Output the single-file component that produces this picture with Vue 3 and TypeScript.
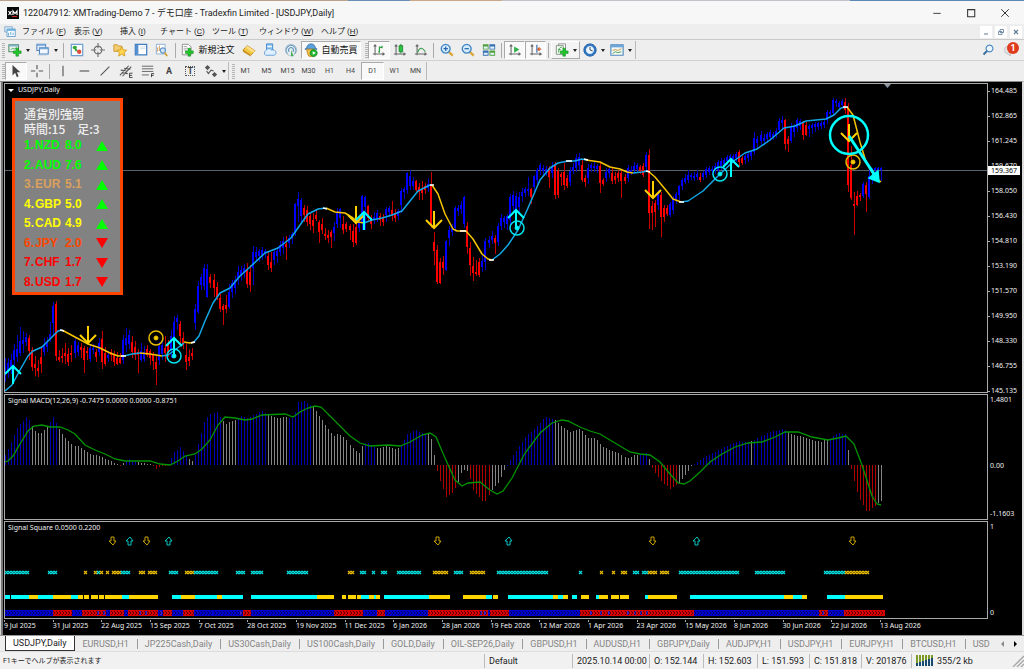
<script setup lang="ts">
import { h, ref } from 'vue'

type Shape = { d: string; f?: string; s?: string; w?: number }

const green = '#1fb82c'
const plus = (x: number, y: number): Shape => ({
  d: `M${x + 3} ${y}h3v3h3v3h-3v3h-3v-3h-3v-3h3z`, f: '#22c42c', s: '#128a1c', w: 0.6,
})
const axes: Shape = { d: 'M3.5 2v12M1 12.5h13M2 4l1.500-2 1.500 2M12 11l2 1.500-2 1.500', s: '#666', w: 1.2 }

const icons: Record<string, Shape[]> = {
  newChart: [{ d: 'M1 2h11v8H1z', f: '#eef5ee', s: '#4d8a66', w: 1.2 }, { d: 'M1 2h11v2H1z', f: '#7fb2c9' }, { d: 'M3 8l2-2 2 1 3-2', s: '#3f9b58' }, plus(6, 6)],
  profiles: [{ d: 'M1 1.500h10v7H1z', f: '#e4eefa', s: '#5386bd', w: 1.2 }, { d: 'M4 5.500h10v7H4z', f: '#f3f8ff', s: '#5386bd', w: 1.2 }, { d: 'M4 5h10v2H4zM1 1h10v2H1z', f: '#74a3d6' }, { d: 'M2 13.500h11', s: '#9bbbdd' }],
  market: [{ d: 'M1.500 1.500h13v13h-13z', f: '#fff', s: '#6ea0d0', w: 1.4 }, { d: 'M3 5a2.500 2 0 1 1 5 0a2.500 2 0 1 1-5 0', f: '#35a838' }, { d: 'M5 6l3 1 1 3-3-1z', f: '#35a838' }, { d: 'M8 10a2.500 2.500 0 1 1 5 0a2.500 2.500 0 1 1-5 0', f: '#df4b3d' }],
  target: [{ d: 'M8 3.500a4.500 4.500 0 1 0 .01 0M8 0v6M8 10v6M0 8h6M10 8h6', s: '#707070', w: 1.3 }],
  navigator: [{ d: 'M1 2h4l1 1.500h4v6H1z', f: '#f6cf70', s: '#c99327' }, { d: 'M10 4l1.700 3.800 4 .4-3 2.700.9 4-3.600-2.100L6.400 15l.9-4-3-2.700 4-.4z', f: '#ffd64d', s: '#d29a22' }],
  terminal: [{ d: 'M1.500 1.500h13v12h-13z', f: '#fff', s: '#3e7dc0', w: 1.4 }, { d: 'M2 2h3v11H2z', f: '#558fd0' }, { d: 'M7 4.500h6M7 6.500h6', s: '#c9d8e8' }],
  tester: [{ d: 'M1.500 1.500h10v11h-10z', f: '#fff', s: '#83a9cd' }, { d: 'M3 10V5M5 9V3M7 11V6', s: '#d2914a' }, { d: 'M9 5.500a3 3 0 1 0 .01 0', f: '#cce4f8', s: '#5d93c4', w: 1.3 }, { d: 'M11 11l3 4', s: '#d7a43a', w: 2 }],
  order: [{ d: 'M1.500 1.500h7l3 3v9h-10z', f: '#fff', s: '#888' }, { d: 'M3 6h5M3 8h4M3 4h4', s: '#a7a7a7' }, plus(5, 6)],
  gold: [{ d: 'M1 8l5-5 9 6-5 5z', f: '#f2c744', s: '#b9831b' }, { d: 'M1 8l9 6v1.500L1 10z', f: '#c98f1e' }, { d: 'M6 3l9 6-2 2-9-6z', f: '#ffe08a' }],
  server: [{ d: 'M4 1h7v7H4z', f: '#8fc5f2', s: '#3f88c9' }, { d: 'M5 4h5', s: '#fff', w: 1.5 }, { d: 'M3 14a3 3 0 0 1 0-5 4 4 0 0 1 7-1 3 3 0 0 1 3 6z', f: '#deefff', s: '#5a9ad2' }],
  signals: [{ d: 'M8 1.500a6.500 6.500 0 1 0 .01 0', f: '#e7eef3', s: '#a5bac9' }, { d: 'M4 12a5.500 5.500 0 1 1 8 0M6 10a2.800 2.800 0 1 1 4 0', s: '#5f93b8', w: 1.2 }, { d: 'M8 8l3 7H8z', f: '#42ae4e' }],
  auto: [{ d: 'M3 6a5 5 0 0 1 10 0l2 1H1z', f: '#5aa2dd', s: '#3271a9' }, { d: 'M3 7h9v4a4 4 0 0 1-8 1z', f: '#f2c14b', s: '#b78323' }, { d: 'M11 7.500a4 4 0 1 0 .01 0', f: green, s: '#148a20' }, { d: 'M10 9.500v4l3.500-2z', f: '#fff' }],
  bars: [axes, { d: 'M8.500 4v7M8.500 10H7M8.500 5h3M11.500 3v3', s: '#2f9e44', w: 1.4 }],
  candles: [axes, { d: 'M9 1v11', s: '#188a2c' }, { d: 'M7 3h4v7H7z', f: '#2fc345', s: '#188a2c' }],
  line: [axes, { d: 'M4 11c2-6 5-7 9-1', s: '#3b9d4b', w: 1.3 }],
  zoomIn: [{ d: 'M10 10l4.500 4.500', s: '#dba63a', w: 2.8 }, { d: 'M6.500 1.500a5 5 0 1 0 .01 0', f: '#d5ecff', s: '#3b83c4', w: 1.5 }, { d: 'M4 6.500h5M6.500 4v5', s: '#2b68ab', w: 1.4 }],
  zoomOut: [{ d: 'M10 10l4.500 4.500', s: '#dba63a', w: 2.8 }, { d: 'M6.500 1.500a5 5 0 1 0 .01 0', f: '#d5ecff', s: '#3b83c4', w: 1.5 }, { d: 'M4 6.500h5', s: '#2b68ab', w: 1.4 }],
  tile: [{ d: 'M1 1.500h6.500v6H1zM8.500 8.500H15v6H8.500z', f: '#4fa03a' }, { d: 'M8.500 1.500H15v6H8.500zM1 8.500h6.500v6H1z', f: '#366fae' }, { d: 'M2 4h4.500v2.500H2zM9.500 4H14v2.500H9.500zM2 11h4.500v2.500H2zM9.500 11H14v2.500H9.500z', f: '#e6f3ff' }],
  scroll: [axes, { d: 'M7 4l6 3.500L7 11z', f: '#2fae46' }],
  shift: [axes, { d: 'M9 2v9', s: '#3c71b0', w: 1.4 }, { d: 'M14 7h-4M12 5l-2 2 2 2', s: '#d0571e', w: 1.3 }],
  indicators: [{ d: 'M4 1h8v10H4z', f: '#fff', s: '#8a8a8a' }, { d: 'M1.500 3h8v10h-8z', f: '#f4fff4', s: '#7c8a7c' }, { d: 'M4 11c1-6 1-6 4-6M3.500 7.500h3', s: '#3a9a48' }, plus(6, 6)],
  clock: [{ d: 'M8 1a7 7 0 1 0 .01 0', f: '#2f78c4', s: '#1d559a' }, { d: 'M8 3.500a4.500 4.500 0 1 0 .01 0', f: '#e9f4ff' }, { d: 'M8 4.500V8l3 1', s: '#345' }],
  template: [{ d: 'M1 2h14v12H1z', f: '#f5faf5', s: '#4d87bd', w: 1.3 }, { d: 'M1 2h14v3H1z', f: '#6ea6da' }, { d: 'M3 8.500l3-1 3 1 4-2', s: '#bd8c35' }, { d: 'M3 12l3-2 3 1 4-1', s: '#38994d' }],
  cursor: [{ d: 'M4 1v12l3-3 2 5 2-1-2-4.500h4z', f: '#444' }],
  cross: [{ d: 'M8 1v5M8 10v5M1 8h5M10 8h5', s: '#555', w: 1.3 }],
  vline: [{ d: 'M8 2v12', s: '#555', w: 1.3 }],
  hline: [{ d: 'M3 8h11', s: '#555', w: 1.3 }],
  trend: [{ d: 'M3 13L13 3', s: '#555', w: 1.3 }],
  channel: [{ d: 'M1 13L11 2M4 14L14 3M2 7l8 1M3 10l7 1M6 5l7 1', s: '#555', w: 1.2 }, { d: 'M15.500 10.500H12v5h3.500M12 13h3', s: '#333' }],
  fibo: [{ d: 'M1 2.500h13M1 5.500h13M1 8.500h13M1 12.500h8', s: '#666', w: 1.1 }, { d: 'M15 11h-3v4M12 13h2.500', s: '#333' }],
  arrows: [{ d: 'M1 4l3-3 3 3-3 3zM9 12l3-3 3 3-3 3z', f: '#555' }, { d: 'M3 8l2 3 3-4 3 1', s: '#555', w: 1.3 }],
  search: [{ d: 'M10 1.500a4.500 4.500 0 1 0 .01 0', f: '#eaf5ff', s: '#4b89c2', w: 1.5 }, { d: 'M7 9l-5 5', s: '#39719f', w: 2.5 }],
  chat: [{ d: 'M6 3a6 5 0 1 0 0 10l2 3 1-4c4-3 2-9-3-9z', f: '#e1e1e1', s: '#b5b5b5' }],
  app: [{ d: 'M1 1h10v7H1z', f: '#dceefb', s: '#6a9cc5' }, { d: 'M4 4h11v10H4z', f: '#f5fbff', s: '#4b8ec0' }, { d: 'M4 4h11v2.500H4z', f: '#6eb2df' }, { d: 'M6 9v4M9 8v4M12 9v3', s: '#4c9bc4' }],
  minimize: [{ d: 'M3 8.500h10', s: '#333', w: 1.2 }],
  maximize: [{ d: 'M3.500 3.500h9.500v9.500H3.500z', s: '#333', w: 1.4 }],
  close: [{ d: 'M3 3l10 10M13 3L3 13', s: '#333', w: 1.3 }],
  childMin: [{ d: 'M4 12h8', s: '#5f7896', w: 2 }],
  childRestore: [{ d: 'M6 3h7v6H6zM3 7h7v6H3z', f: '#fff', s: '#5f7896', w: 1.6 }],
  childClose: [{ d: 'M4 4l8 8M12 4l-8 8', s: '#5f7896', w: 2.4 }],
}

const Icon = (props: { name: string }) =>
  h('svg', { viewBox: '0 0 16 16', class: 'icon', 'aria-hidden': 'true' },
    (icons[props.name] ?? []).map((p) => h('path', { d: p.d, fill: p.f ?? 'none', stroke: p.s ?? 'none', 'stroke-width': p.w ?? 1 })))
Icon.props = ['name']

const menus = [
  ['ファイル', 'F'], ['表示', 'V'], ['挿入', 'I'], ['チャート', 'C'], ['ツール', 'T'], ['ウィンドウ', 'W'], ['ヘルプ', 'H'],
]
const frames = ['M1', 'M5', 'M15', 'M30', 'H1', 'H4', 'D1', 'W1', 'MN']
const frame = ref('D1')
const tabs = ['USDJPY,Daily', 'EURUSD,H1', 'JP225Cash,Daily', 'US30Cash,Daily', 'US100Cash,Daily', 'GOLD,Daily', 'OIL-SEP26,Daily', 'GBPUSD,H1', 'AUDUSD,H1', 'GBPJPY,Daily', 'AUDJPY,H1', 'USDJPY,H1', 'EURJPY,H1', 'BTCUSD,H1', 'USD']
const tab = ref(0)

const strengths = [
  { n: '1.', c: 'NZD', v: '8.0', tone: 'lime', up: true },
  { n: '2.', c: 'AUD', v: '7.6', tone: 'lime', up: true },
  { n: '3.', c: 'EUR', v: '5.1', tone: 'sand', up: true },
  { n: '4.', c: 'GBP', v: '5.0', tone: 'yellow', up: true },
  { n: '5.', c: 'CAD', v: '4.9', tone: 'yellow', up: true },
  { n: '6.', c: 'JPY', v: '2.0', tone: 'orange', up: false },
  { n: '7.', c: 'CHF', v: '1.7', tone: 'red', up: false },
  { n: '8.', c: 'USD', v: '1.7', tone: 'red', up: false },
]

const prices = ['164.485', '162.865', '161.245', '159.670', '158.050', '156.430', '154.810', '153.190', '151.570', '149.950', '148.330', '146.755', '145.135']
const dates = ['9 Jul 2025', '31 Jul 2025', '22 Aug 2025', '15 Sep 2025', '7 Oct 2025', '28 Oct 2025', '19 Nov 2025', '11 Dec 2025', '6 Jan 2026', '28 Jan 2026', '19 Feb 2026', '12 Mar 2026', '1 Apr 2026', '23 Apr 2026', '15 May 2026', '8 Jun 2026', '30 Jun 2026', '22 Jul 2026', '13 Aug 2026']

// One token per day: direction, then high, body top, body bottom, low.
const ohlc = `
b358,366,376,382 b358,363,372,378 b354,360,368,374 b344,350,360,370 b335,349,357,362 b327,341,353,356 b331,340,344,353 b333,337,342,346 r335,338,351,360 r347,350,367,371
r356,364,368,376 r360,368,371,377 r347,357,364,373 b338,346,352,356 b337,343,347,352 b322,334,338,342 b302,306,323,335 r301,304,356,361 r350,357,360,362 r348,356,358,363
r343,353,356,364 r348,354,362,366 r345,353,355,362 b338,341,353,358 b342,345,352,356 r343,347,350,358 r346,348,360,373 r347,351,353,360 b345,348,359,362 b344,348,350,354
r349,352,357,362 b338,343,352,356 r331,339,362,369 r347,353,364,366 b351,355,358,362 r349,352,355,361 r351,355,362,366 r352,358,364,365 r353,358,363,364 b335,340,360,364
b328,338,345,352 b330,335,344,349 r336,342,352,358 r341,347,355,360 r349,352,355,373 b343,351,360,362 b346,352,359,362 r345,349,355,357 r349,351,358,365 r352,355,361,370
r356,362,369,385 b342,346,360,365 b338,345,354,360 r336,348,353,362 r340,344,352,357 b330,336,350,358 b316,322,342,350 b315,318,322,330 r321,324,336,345 r332,338,345,349
r343,355,362,370 r349,357,361,366 r348,353,356,360 b304,309,323,330 b281,286,312,314 b274,277,285,290 b264,268,286,290 b264,269,297,298 r274,277,283,288 r274,280,288,297
r282,287,297,300 r294,298,309,312 r304,306,310,325 r295,305,309,313 b284,292,307,309 b280,283,292,298 b276,280,288,294 b266,272,278,285 b266,270,275,281 b264,268,272,278
r263,269,284,288 r265,272,285,292 b246,252,268,285 b247,252,257,262 b249,251,256,262 b247,250,255,260 b249,251,254,258 r251,256,265,270 r252,262,268,272 b250,252,260,265
b247,251,256,263 b241,245,252,256 b237,241,248,254 r236,244,247,260 b235,238,243,248 b232,234,238,244 b203,204,232,236 b192,199,206,222 b198,200,216,222 r205,208,215,222
r206,210,222,226 r212,216,224,230 r213,220,226,233 r210,215,219,221 r220,222,232,243 r218,224,230,234 r228,234,236,240 r230,235,238,243 r230,232,237,248 b222,227,233,241
b208,212,224,228 b208,209,218,228 r216,224,230,234 r222,224,229,232 r224,226,230,240 r224,231,242,247 r220,227,243,245 b217,222,228,232 b195,196,222,230 b196,197,207,230
r205,206,218,221 r215,219,224,229 b212,217,220,224 b210,213,219,222 r213,216,220,226 r214,218,222,226 b207,209,215,222 b206,208,212,217 r201,210,216,221 r209,213,218,222
b209,211,216,220 b188,191,205,213 b187,189,192,199 b172,173,190,194 b170,176,186,190 b177,181,186,190 r180,181,190,193 r183,187,192,200 r181,189,193,200 r183,186,190,194
b178,184,188,192 r172,185,225,228 r232,242,251,265 r245,250,282,284 r258,262,283,284 r256,262,268,275 b240,241,270,271 b226,230,238,246 b224,228,232,236 b206,208,228,232
b205,208,211,216 b201,205,209,214 b196,197,224,228 r222,226,247,254 r242,248,265,276 r257,266,273,281 r260,272,274,276 r258,262,275,277 b255,261,267,272 b238,241,262,270
b236,240,243,248 b231,236,240,244 r235,238,243,254 b223,226,242,246 b214,218,226,230 b216,218,222,228 b214,216,224,230 b194,197,220,228 b191,195,206,212 b193,196,214,220
b192,197,207,214 b188,192,196,202 b187,189,193,197 b177,189,191,196 r188,189,197,204 b175,176,187,193 b168,170,180,184 b163,165,170,175 b165,168,171,176 b166,169,172,176
r166,168,177,188 b162,167,173,178 r162,165,195,199 r168,171,195,198 r172,174,177,186 r163,172,185,190 r175,178,186,188 b167,171,182,186 b163,167,171,174 b154,158,168,172
b153,157,165,170 r160,165,180,182 r175,178,182,187 b164,168,178,184 b163,165,168,172 b162,166,168,172 b164,166,169,173 r162,166,183,193 r178,180,184,186 b168,172,178,182
b166,169,173,178 r168,173,181,184 r172,176,180,184 r170,173,178,182 r170,173,181,198 r174,177,181,184 b165,168,178,182 b166,170,172,175 b162,166,170,174 b163,165,169,172
r165,167,171,174 r163,166,175,177 b152,155,167,172 r149,155,213,229 r201,206,213,230 r200,203,212,227 b190,193,205,210 r192,195,217,237 r205,208,217,222 r205,208,214,216
b202,204,215,217 b196,198,210,214 b192,194,200,204 b185,186,195,200 b178,180,186,190 b174,178,182,184 b170,175,180,183 b173,175,177,180 b172,176,178,181 b170,174,177,180
r173,177,180,182 b171,173,177,180 b167,169,175,178 b166,168,172,175 b166,169,171,175 b163,166,170,174 b160,162,170,172 b158,161,166,170 b158,160,164,168 b155,157,161,165
b154,156,160,164 b154,156,159,163 b152,154,158,162 r150,152,162,167 r156,158,163,165 b154,156,160,164 b152,154,158,162 b150,152,156,160 b132,138,152,155 b136,139,143,148
b131,135,141,145 b134,138,141,145 b132,134,139,143 b130,132,137,141 b132,134,137,140 b128,131,135,138 b118,121,130,133 b116,120,123,130 r119,120,144,150 r136,139,144,152
b123,127,141,143 b124,126,132,137 b118,120,128,132 b119,121,126,130 r121,123,135,140 r122,125,135,136 b124,126,129,137 b123,125,128,134 b122,124,127,132 b122,123,127,130
b121,123,126,129 b119,122,125,128 b110,112,120,124 b110,112,114,118 b98,100,113,115 b99,101,103,107 b101,103,107,110 b99,101,105,108 r98,102,110,114 r103,108,185,192
r146,165,198,200 r192,204,206,235 r191,196,205,206 r193,195,197,201 b182,184,196,198 r182,185,194,212 b170,176,197,199 b168,170,173,184 b167,168,170,178 b167,168,170,172 b167,168,170,181`
  .trim().split(/\s+/)

const pitch = 3.022
const barX = (i: number) => Math.round(5 + pitch * i)
const candles = ohlc.map((t, i) => {
  const [hi, top, bottom, lo] = t.slice(1).split(',').map(Number)
  return { x: barX(i), hi, top, bottom, lo, up: t[0] === 'b' }
})

type Span = [string, string]
const averages: Span[] = [
  ['blue', '5,391 12,385 20,370 28,356 33,351 42,347 50,339 58,331 62,330'],
  ['gold', '62,330 75,337 88,344 100,348 110,353 118,356 124,356'],
  ['blue', '124,356 132,354 140,353'],
  ['gold', '140,353 150,354 162,356'],
  ['blue', '162,356 168,355 175,350 184,343'],
  ['gold', '184,342 190,343 194,342'],
  ['blue', '194,342 199,336 205,321 213,303 220,293 230,288 240,276 250,267 265,253 278,248 291,238 300,225 308,214 318,209 326,208'],
  ['gold', '326,208 335,212 345,213 353,218 358,222 364,223'],
  ['blue', '364,223 372,220 382,218 392,215 402,211 410,201 418,191 430,185 432,185'],
  ['gold', '432,185 438,194 445,214 453,229 457,231 466,231 473,239 482,254 488,259 492,260'],
  ['blue', '492,260 500,254 508,245 518,230 528,208 540,180 550,168 558,163 568,161 575,161 582,159 586,160'],
  ['gold', '586,160 600,162 610,167 620,169 627,172 633,173'],
  ['blue', '633,173 642,172 648,171'],
  ['gold', '648,171 655,177 665,189 673,199 681,202'],
  ['blue', '681,202 688,201 703,191 720,174 735,160 745,153 757,149 770,140 784,128 795,126 806,121 826,119 834,115 841,108 847,107'],
  ['gold', '847,107 853,115 860,142 866,162 875,177 881,182'],
]
const turns = ['60,330 64,331', '121,356 126,356', '191,343 195,342', '323,208 327,209', '430,185 434,185', '460,231 466,231', '489,260 494,260', '566,161 572,161', '584,159 588,160', '646,171 650,172', '679,202 684,202', '843,107 848,107']

const downs = [[88, 344], [356, 224], [434, 229], [653, 199], [849, 142]]
const ups = [[13, 365], [174, 337], [364, 211], [516, 209], [731, 158]]
const rings = [
  { x: 156, y: 338, gold: true }, { x: 853, y: 162, gold: true },
  { x: 174, y: 356, gold: false }, { x: 517, y: 228, gold: false }, { x: 720, y: 174, gold: false },
]

const points = (s: string) => s.split(' ').map((p) => p.split(',').map(Number))
const envelope = points('5,455 11,442 17,428 26,417 29,420 35,431 40,434 48,426 53,417 60,431 70,444 80,447 90,454 100,456 110,461 118,464 121,466 124,462 128,459 135,461 140,463 150,464 153,466 156,469 160,466 168,464 174,452 180,447 184,452 190,460 193,462 199,440 205,418 212,413 217,412 225,424 235,420 240,416 247,418 255,414 262,411 275,418 285,417 293,418 298,402 305,401 314,408 325,425 333,436 338,434 342,436 348,442 355,451 360,453 363,442 370,444 378,449 386,446 395,449 400,448 407,434 415,430 425,434 430,434 432,444 435,460 438,476 446,497 453,492 458,482 462,470 468,471 473,490 484,503 492,490 500,480 505,467 509,462 513,455 525,437 535,428 545,417 554,419 560,425 570,432 580,429 588,438 595,438 602,446 610,450 620,454 628,458 635,455 643,454 647,452 650,463 653,470 662,482 670,489 678,484 686,474 690,467 696,463 708,455 720,449 732,443 740,441 748,443 757,438 770,432 784,429 792,435 800,436 810,439 820,442 830,438 838,433 845,434 848,450 851,469 858,496 867,513 873,507 884,499')
const shades = 'b32 g49 b59 g119 r122 g125 b136 g151 r166 b188 g194 b221 g237 b267 g287 b311 g363 b376 g400 b427 g437 r458 g470 r491 g507 b554 g640 b649 g652 r679 g692 b750 g752 b786 g828 b846 g849 r877 g890'
  .split(' ').map((t) => ({ c: t[0], end: Number(t.slice(1)) }))
const zero = 465
const histogram = ohlc.map((_, i) => {
  const x = barX(i)
  const k = Math.max(1, envelope.findIndex((p) => p[0] >= x))
  const [x0, y0] = envelope[k - 1]
  const [x1, y1] = envelope[k]
  const y = Math.round(y0 + ((y1 - y0) * (x - x0)) / (x1 - x0))
  return { x, y, c: shades.find((s) => x < s.end)?.c ?? 'g' }
})
const signal = '5,462 8,461 13,456 20,444 28,431 34,426 42,425 50,427 60,427 68,430 75,434 85,445 95,450 105,454 115,459 125,461 150,461 160,464 170,465 178,461 185,456 195,454 202,449 210,440 218,425 225,417 235,418 245,420 252,419 262,415 285,414 293,417 300,412 308,408 315,406 321,407 330,416 340,426 350,436 360,443 370,446 388,445 400,446 410,442 422,435 430,433 436,437 445,458 455,480 462,486 468,483 480,482 490,490 497,494 503,491 512,478 525,453 540,433 552,423 562,420 568,421 580,427 590,431 600,434 615,443 630,452 640,454 650,455 660,462 670,474 678,483 684,484 690,481 700,472 710,462 722,454 735,447 748,443 762,442 775,437 785,432 798,432 812,437 828,440 838,438 846,436 854,444 862,465 872,496 877,504 881,505'

const spans = (s: string) => s.split(' ').map((t) => {
  const [a, b] = t.slice(1).split('-').map(Number)
  return { c: t[0], a, b }
})
const marks = spans('c5-30 c48-57 y84-88 y94-97 c97-100 y100-103 y106-109 y112-121 c121-130 y139-146 y148-158 c169-179 y185-194 c194-218 c236-245 c251-264 c287-309 y348-355 c360-367 c372-375 c381-388 c397-421 y433-449 c454-463 y470-485 c497-548 c579-582 y600-603 y612-615 y621-628 c633-640 c642-648 y648-658 y660-670 c679-740 c755-785 c824-845 y845-870')
const crosses = marks.flatMap((m) => {
  const n = Math.max(1, Math.round((m.b - m.a) / 3))
  return Array.from({ length: n }, (_, i) => ({ x: m.a + i * 3, c: m.c }))
})
const blocks = spans('c5-10 c11-29 y29-38 c38-53 y53-71 c71-78 y78-83 y84-89 y91-98 y99-104 y105-122 c122-129 y129-158 c172-181 y181-195 c195-217 y217-222 c222-243 c251-317 y317-334 y342-346 y348-356 y357-361 c361-369 y369-374 c374-376 y376-380 c384-429 y429-450 y463-486 c486-492 y493-498 c508-553 y553-558 c558-563 y563-568 c572-577 y581-589 c596-599 y599-608 y611-619 y620-629 c645-648 y648-677 c690-784 y784-793 c793-802 y802-807 c827-845 y845-883')
const reds = spans('r53-72 r82-106 r110-124 r128-158 r163-172 r183-194 r243-251 r334-363 r377-385 r428-488 r490-509 r580-694 r819-828 r844-885')
const cells = ohlc.map((_, i) => barX(i))
const flips = [97, 103, 139, 145, 160, 240, 480, 484, 590, 600, 608, 627, 634, 640, 646, 822]
const smallDown = [112, 146, 437, 652, 852]
const smallUp = [129, 168, 508, 696]
</script>

<template>
  <div class="window">
    <div class="desktop"></div>
    <header class="title">
      <svg class="logo" viewBox="0 0 12 12" aria-hidden="true"><rect width="12" height="12" fill="#080808" /><path d="M1.500 4l3 4M4.500 4l-3 4M6 8V4l2 2.500L10 4v4" stroke="#fff" stroke-width="1.200" fill="none" /><path d="M5 9.500h5" stroke="#c22" /></svg>
      <h1>122047912: XMTrading-Demo 7 - デモ口座 - Tradexfin Limited - [USDJPY,Daily]</h1>
      <button v-for="n in ['minimize', 'maximize', 'close']" :key="n" class="win" :aria-label="n"><Icon :name="n" /></button>
    </header>
    <nav class="menu">
      <span class="appicon"><Icon name="app" /></span>
      <div class="items">
        <button v-for="m in menus" :key="m[1]">{{ m[0] }} (<u>{{ m[1] }}</u>)</button>
      </div>
      <button v-for="n in ['childMin', 'childRestore', 'childClose']" :key="n" class="child" :aria-label="n"><Icon :name="n" /></button>
    </nav>

    <div class="bar first">
      <i class="grip"></i>
      <div class="group g-files">
        <button aria-label="New chart"><Icon name="newChart" /><b class="drop"></b></button>
        <button aria-label="Profiles"><Icon name="profiles" /><b class="drop"></b></button>
      </div>
      <i class="sep"></i>
      <div class="group g-five">
        <button v-for="n in ['market', 'target', 'navigator', 'terminal', 'tester']" :key="n" :aria-label="n"><Icon :name="n" /></button>
      </div>
      <i class="sep"></i>
      <button class="wide"><Icon name="order" />新規注文</button>
      <div class="group g-three">
        <button v-for="n in ['gold', 'server', 'signals']" :key="n" :aria-label="n"><Icon :name="n" /></button>
      </div>
      <button class="wide on"><Icon name="auto" />自動売買</button>
      <i class="grip inner"></i>
      <div class="group g-three">
        <button class="on" aria-label="Bar chart"><Icon name="bars" /></button>
        <button aria-label="Candlesticks"><Icon name="candles" /></button>
        <button aria-label="Line chart"><Icon name="line" /></button>
      </div>
      <i class="sep"></i>
      <div class="group g-three">
        <button v-for="n in ['zoomIn', 'zoomOut', 'tile']" :key="n" :aria-label="n"><Icon :name="n" /></button>
      </div>
      <i class="sep"></i>
      <div class="group g-two">
        <button class="on" aria-label="Auto scroll"><Icon name="scroll" /></button>
        <button class="on" aria-label="Chart shift"><Icon name="shift" /></button>
      </div>
      <i class="sep"></i>
      <div class="group g-drops">
        <button class="raised" aria-label="Indicators"><Icon name="indicators" /><b class="drop"></b></button>
        <button aria-label="Periods"><Icon name="clock" /><b class="drop"></b></button>
        <button aria-label="Templates"><Icon name="template" /><b class="drop"></b></button>
      </div>
      <i class="end"></i>
      <span class="space"></span>
      <button class="tool" aria-label="Search"><Icon name="search" /></button>
      <button class="tool notice" aria-label="Messages"><Icon name="chat" /><em>1</em></button>
    </div>

    <div class="bar second">
      <i class="grip"></i>
      <div class="group g-two">
        <button class="on" aria-label="Cursor"><Icon name="cursor" /></button>
        <button aria-label="Crosshair"><Icon name="cross" /></button>
      </div>
      <i class="sep"></i>
      <div class="group g-lines">
        <button v-for="n in ['vline', 'hline', 'trend', 'channel', 'fibo']" :key="n" :aria-label="n"><Icon :name="n" /></button>
        <button class="letter">A</button>
        <button class="letter"><span class="boxed">T</span></button>
      </div>
      <button class="arrows" aria-label="Arrows"><Icon name="arrows" /><b class="drop"></b></button>
      <i class="end"></i>
      <i class="grip"></i>
      <div class="group g-frames">
        <button v-for="f in frames" :key="f" :class="{ on: f === frame }" @click="frame = f">{{ f }}</button>
      </div>
      <i class="end"></i>
    </div>

    <main class="chart">
      <section class="pane price">
        <div class="plot">
          <svg viewBox="5 84 982 308" preserveAspectRatio="none">
            <path d="M5 170.500H987" stroke="#56636f" />
            <g v-for="c in candles" :key="c.x" :fill="c.up ? '#0000ff' : '#ff0000'">
              <rect :x="c.x" :y="c.hi" width="1" :height="c.lo - c.hi" :fill="c.up ? '#0000c8' : '#c80000'" />
              <rect :x="c.x - 1" :y="c.top" width="2" :height="c.bottom - c.top" />
            </g>
            <polyline v-for="(a, i) in averages" :key="i" :points="a[1]" fill="none" :stroke="a[0] === 'blue' ? '#12a8e8' : '#f5c400'" stroke-width="1.500" stroke-linejoin="round" />
            <polyline v-for="t in turns" :key="t" :points="t" fill="none" stroke="#fff" stroke-width="1.500" />
            <path d="M884 84h7l-3.500 4z" fill="#8c98a4" />
            <path v-for="d in downs" :key="'d' + d[0]" :d="`M${d[0]} ${d[1] - 18}v17M${d[0] - 8} ${d[1] - 9}l8 8l8 -8`" stroke="#ffd000" stroke-width="2" fill="none" />
            <path v-for="u in ups" :key="'u' + u[0]" :d="`M${u[0]} ${u[1] + 19}v-17M${u[0] - 8} ${u[1] + 9}l8 -8l8 8`" stroke="#00ffff" stroke-width="2" fill="none" />
            <g v-for="r in rings" :key="'r' + r.x" :stroke="r.gold ? '#e8bc00' : '#00e5ee'" :fill="r.gold ? '#ffd000' : '#00ffff'">
              <circle :cx="r.x" :cy="r.y" r="7" fill="none" stroke-width="1.500" /><circle :cx="r.x" :cy="r.y" r="2" />
            </g>
            <circle cx="849" cy="135" r="19" fill="none" stroke="#00ffff" stroke-width="2.500" />
            <path d="M849 136l27 41" stroke="#00ffff" stroke-width="3" />
            <path d="M879 182l-10-4 9-7z" fill="#00ffff" stroke="#00ffff" stroke-width="1.500" />
          </svg>
          <p class="label"><b class="drop"></b>USDJPY,Daily</p>
          <aside class="strength">
            <h2>通貨別強弱</h2>
            <h2>時間:15　足:3</h2>
            <ul>
              <li v-for="s in strengths" :key="s.c" :class="s.tone">
                <span>{{ s.n }}</span><span>{{ s.c }}</span><span>{{ s.v }}</span><i :class="s.up ? 'up' : 'down'"></i>
              </li>
            </ul>
          </aside>
        </div>
        <div class="axis scale">
          <span v-for="p in prices" :key="p">{{ p }}</span>
          <strong>159.367</strong>
        </div>
      </section>

      <section class="pane macd">
        <div class="plot">
          <svg viewBox="5 395 982 124" preserveAspectRatio="none">
            <rect v-for="b in histogram" :key="b.x" :class="b.c" :x="b.x" :y="Math.min(b.y, zero)" width="1" :height="Math.max(1, Math.abs(zero - b.y))" />
            <polyline :points="signal" fill="none" stroke="#009400" stroke-width="1.300" />
          </svg>
          <p class="label">Signal MACD(12,26,9) -0.7475 0.0000 0.0000 -0.8751</p>
        </div>
        <div class="axis ends"><span>1.4801</span><span class="mid">0.00</span><span>-1.1603</span></div>
      </section>

      <section class="pane square">
        <div class="plot">
          <svg viewBox="5 522 982 96" preserveAspectRatio="none">
            <path v-for="x in smallDown" :key="'sd' + x" :d="`M${x - 1} 537h3v4h2l-3 4l-4 -4h2z`" fill="none" stroke="#c9a200" />
            <path v-for="x in smallUp" :key="'su' + x" :d="`M${x - 1} 545h3v-4h2l-3 -4l-4 4h2z`" fill="none" stroke="#00c4c4" />
            <path v-for="m in crosses" :key="'m' + m.x" :d="`M${m.x} 571l3 3M${m.x + 3} 571l-3 3`" :stroke="m.c === 'c' ? '#00e0e0' : '#e8ba00'" stroke-width="1.200" />
            <rect v-for="b in blocks" :key="'b' + b.a" :x="b.a" y="595" :width="b.b - b.a" height="4" :fill="b.c === 'c' ? '#00ffff' : '#ffd500'" />
            <rect x="5" y="610" width="880" height="6" fill="#0000d0" />
            <rect v-for="r in reds" :key="'q' + r.a" :x="r.a" y="610" :width="r.b - r.a" height="6" fill="#d80000" />
            <rect v-for="f in flips" :key="'f' + f" :x="f" y="611" width="2" height="4" fill="#4020c0" />
            <path v-for="x in cells" :key="'c' + x" :d="`M${x} 611l2 2l-2 2`" fill="none" stroke="#000" stroke-opacity="0.550" />
          </svg>
          <p class="label">Signal Square 0.0500 0.2200</p>
        </div>
        <div class="axis ends"><span>1</span><span>0</span></div>
      </section>
      <ol class="dates"><li v-for="d in dates" :key="d">{{ d }}</li></ol>
    </main>

    <nav class="tabs">
      <button v-for="(t, i) in tabs" :key="t" :class="{ active: i === tab }" @click="tab = i">{{ t }}</button>
      <span class="space"></span>
      <button class="arrow dim" aria-label="Previous tabs"></button>
      <button class="arrow next" aria-label="Next tabs"></button>
    </nav>
    <footer class="status">
      <span class="help">F1キーでヘルプが表示されます</span>
      <span>Default</span><span>2025.10.14 00:00</span><span>O: 152.144</span><span>H: 152.603</span><span>L: 151.593</span><span>C: 151.818</span><span>V: 201876</span>
      <span class="traffic">
        <svg viewBox="0 0 18 11" aria-hidden="true"><path v-for="n in 6" :key="n" :d="`M${n * 3 - 2} 0v11`" stroke="#7c9a25" stroke-width="2" /><path v-for="n in 6" :key="'k' + n" :d="`M${n * 3 - 2} ${9 - n}V11`" stroke="#174a70" stroke-width="2" /></svg>
        355/2 kb
        <svg class="resize" viewBox="0 0 12 12" aria-hidden="true"><path d="M1 12L12 1M5 12l7-7M9 12l3-3" stroke="#a5a5a5" stroke-width="1.300" /></svg>
      </span>
    </footer>
  </div>
</template>

<style>
body { margin: 0; background: #eee; overflow: hidden; }
</style>

<style scoped>
* { box-sizing: border-box; }
button { border: 0; padding: 0; margin: 0; background: none; font: inherit; color: inherit; }
h1, h2, p, ul, ol { margin: 0; padding: 0; list-style: none; }
.window { display: flex; flex-direction: column; height: 100vh; background: #eee; color: #222; font: 9px/12px Roboto, "Noto Sans CJK JP", sans-serif; white-space: nowrap; overflow: hidden; }
.desktop { height: 1px; flex: none; background: linear-gradient(90deg, #b8a28c 0 34%, #6b8fb8 34% 40%, #c9a98a 40% 49%, #c2c2c8 49% 83%, #5d87b4 83%); }
.icon { width: 14px; height: 14px; display: block; flex: none; }
.space { flex: 1; }

.title { display: flex; align-items: center; height: 23px; flex: none; background: #f7f7f7; padding: 0 2px 0 7px; }
.title h1 { flex: 1; font-size: 9px; font-weight: 400; margin-left: 4px; }
.logo { width: 12px; height: 12px; }
.win { width: 34px; height: 23px; display: grid; place-items: center; }
.win .icon { width: 12px; height: 12px; }

.menu { display: flex; align-items: center; height: 16px; flex: none; padding-right: 2px; border-bottom: 1px solid #c9c9c9; font-size: 8px; }
.appicon { width: 22px; padding-left: 4px; }
.appicon .icon { width: 12px; height: 12px; }
.items { display: grid; grid-template-columns: 52px 46px 40px 52px 47px 62px 60px; flex: 1; }
.items button { text-align: left; }
.child { width: 12px; height: 12px; margin-left: 3px; background: #fff; display: grid; place-items: center; }
.child .icon { width: 8px; height: 8px; }

.bar { display: flex; align-items: center; flex: none; color: #444; }
.first { height: 21px; border-bottom: 1px solid #d0d0d0; }
.second { height: 20px; }
.bar button { display: flex; align-items: center; justify-content: center; height: 18px; min-width: 0; }
.group { display: flex; flex: none; }
.group button { flex: 1; }
.g-files { width: 56px; }
.g-five { width: 107px; }
.g-three { width: 63px; }
.g-two { width: 42px; }
.g-drops { width: 84px; }
.g-lines { width: 149px; }
.g-frames { width: 191px; font-size: 7px; }
.arrows { width: 27px; }
.grip { width: 5px; height: 15px; flex: none; background: repeating-linear-gradient(#b5b5b5 0 1px, #eee 1px 2px) 2px 0 / 3px 100% no-repeat; }
.grip.inner { margin-left: 2px; }
.sep { width: 5px; height: 15px; flex: none; background: linear-gradient(#aaa, #aaa) center / 1px 100% no-repeat; }
.end { width: 2px; height: 18px; flex: none; border-left: 1px solid #bbb; }
.drop { width: 0; height: 0; border: 2px solid transparent; border-top: 3px solid #222; border-bottom: 0; margin-left: 4px; }
.bar .on { background: #f9f9f9; border: 1px solid; border-color: #aaa #fff #fff #aaa; }
.bar .raised { border: 1px solid; border-color: #fff #aaa #aaa #fff; background: #f4f4f4; }
.bar .wide { width: 60px; gap: 3px; color: #111; }
.bar .letter { font-weight: 700; }
.boxed { border: 1px dotted #555; width: 10px; height: 10px; line-height: 9px; }
.tool { width: 24px; position: relative; }
.tool .icon { width: 12px; height: 12px; }
.notice { padding-right: 4px; }
.notice em { position: absolute; right: 5px; top: 1px; width: 12px; height: 12px; border-radius: 6px; background: #df3b1c; color: #fff; font-weight: 700; font-style: normal; text-align: center; }

.chart { flex: 1; min-height: 0; display: grid; grid-template-rows: minmax(0, 310fr) minmax(0, 126fr) minmax(0, 98fr) 15px; row-gap: 1px; padding: 1px 2px 0 4px; background: #000; border-top: 1px solid #888; border-right: 2px solid #ddd; font: 7px/8px "Noto Sans", sans-serif; color: #f0f0f0; box-shadow: inset 1px 0 #d5d5d5, inset 3px 0 #777; }
.pane { display: grid; grid-template-columns: minmax(0, 1fr) 32px; min-height: 0; }
.plot { position: relative; border: 1px solid #aaa; min-height: 0; }
.plot > svg { display: block; width: 100%; height: 100%; }
.label { position: absolute; left: 3px; top: 2px; display: flex; align-items: center; gap: 4px; }
.label .drop { border-width: 3px 3px 0; border-top-color: #fff; margin: 0; }
.axis { display: flex; flex-direction: column; justify-content: space-between; padding-left: 3px; position: relative; }
.axis span { position: relative; }
.scale { padding-top: 4px; margin-bottom: -2px; }
.scale span::before { content: ""; position: absolute; left: -3px; top: 4px; width: 2px; height: 1px; background: #aaa; }
.scale strong { position: absolute; left: 0; top: 83px; width: 32px; height: 9px; background: #fff; color: #000; font-weight: 400; padding-left: 3px; line-height: 9px; }
.ends { padding: 2px 0 2px 2px; }
.ends .mid { top: 9px; }
rect.b { fill: #0000b4; }
rect.g { fill: #858585; }
rect.r { fill: #b00000; }
.dates { width: 91%; display: grid; grid-template-columns: repeat(19, minmax(0, 1fr)); }
.dates li { padding-top: 2px; background: linear-gradient(#aaa, #aaa) 0 0 / 1px 2px no-repeat; }

.strength { position: absolute; left: 7px; top: 14px; width: 111px; height: 197px; border: 3px solid #ff4500; background: #828282; padding: 5px 0 0 9px; display: flex; flex-direction: column; font: bold 12px/15px "Liberation Sans", "Noto Sans CJK JP", sans-serif; }
.strength h2 { font: 500 12px/15px "Noto Sans CJK JP", sans-serif; color: #eee; }
.strength ul { flex: 1; display: flex; flex-direction: column; }
.strength li { flex: 1; display: grid; grid-template-columns: 11px 30px 31px 12px; align-items: center; }
.up, .down { width: 0; height: 0; border: 6px solid transparent; }
.up { border-bottom: 10px solid #00ff00; border-top: 0; }
.down { border-top: 10px solid #ff0000; border-bottom: 0; }
.lime { color: #00ff00; }
.sand { color: #dba05c; }
.yellow { color: #ffff00; }
.orange { color: #ff4500; }
.red { color: #ff0000; }

.tabs { display: flex; align-items: center; height: 16px; flex: none; padding-left: 5px; background: #eee; border-top: 1px solid #999; color: #858585; overflow: hidden; }
.tabs button { padding: 0 8px 0 7px; height: 10px; line-height: 10px; border-right: 1px solid #999; }
.tabs button:nth-of-type(n + 15) { border-right: 0; }
.tabs .active { height: 15px; line-height: 14px; color: #222; background: #fff; border: 1px solid #333; border-top: 0; }
.tabs .arrow { width: 0; height: 0; padding: 0; border: 3px solid transparent; flex: none; }
.tabs .arrow.dim { border-right: 3px solid #888; border-left: 0; margin-right: 10px; }
.tabs .arrow.next { border-left: 3px solid #000; border-right: 0; margin-right: 7px; }

.status { display: grid; grid-template-columns: minmax(0, 1fr) 88px 77px 54px 54px 52px 52px 50px 113px; align-items: center; height: 18px; flex: none; background: #f1f1f1; border-top: 1px solid #ddd; }
.status > span { border-left: 1px solid #bbb; padding-left: 4px; line-height: 14px; }
.status .help { border: 0; padding-left: 3px; font-size: 7px; }
.traffic { display: flex; align-items: center; gap: 3px; }
.traffic svg { width: 18px; height: 11px; }
.traffic .resize { width: 12px; height: 12px; margin-left: auto; }
</style>
